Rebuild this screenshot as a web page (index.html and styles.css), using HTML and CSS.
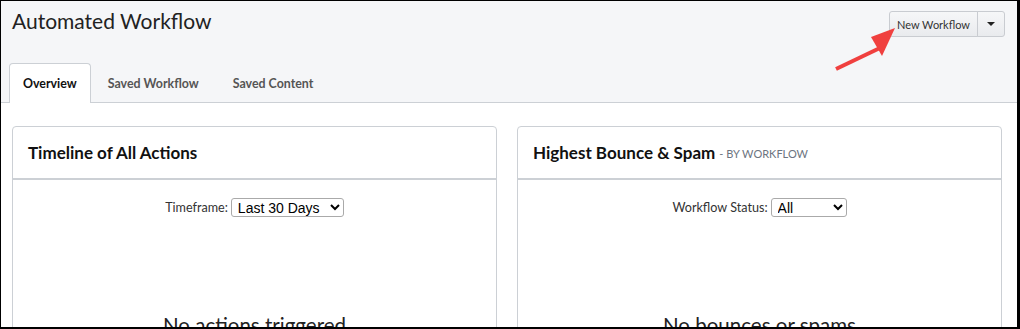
FILE: index.html
```html
<!DOCTYPE html>
<html>
<head>
<meta charset="utf-8">
<link rel="stylesheet" href="styles.css">
</head>
<body>
<div class="frame">
  <div class="top">
    <div class="title-row">
      <h1 class="title">Automated Workflow</h1>
      <div class="btn-group">
        <button class="btn">New Workflow</button>
        <button class="btn caret-btn"><span class="caret"></span></button>
      </div>
    </div>
    <div class="tabs">
      <div class="tab active">Overview</div>
      <div class="tab">Saved Workflow</div>
      <div class="tab">Saved Content</div>
    </div>
  </div>
  <div class="content">
    <div class="card">
      <div class="card-head"><span class="card-title">Timeline of All Actions</span></div>
      <div class="card-body">
        <div class="filter"><span class="label">Timeframe:</span><select class="sel sel-tf"><option>Last 30 Days</option></select></div>
        <div class="empty">No actions triggered</div>
      </div>
    </div>
    <div class="card">
      <div class="card-head"><span class="card-title">Highest Bounce &amp; Spam</span><span class="card-sub"> - BY WORKFLOW</span></div>
      <div class="card-body">
        <div class="filter"><span class="label">Workflow Status:</span><select class="sel sel-st"><option>All</option></select></div>
        <div class="empty">No bounces or spams</div>
      </div>
    </div>
  </div>
  <svg class="arrow" width="80" height="50" viewBox="0 0 80 50">
    <line x1="4" y1="44" x2="50" y2="22" stroke="#f0403f" stroke-width="4" stroke-linecap="butt"/>
    <polygon points="63,3 39,12 50,31" fill="#f0403f"/>
  </svg>
</div>
</body>
</html>
```
FILE: styles.css
```css
* { box-sizing: border-box; }
html, body { margin: 0; padding: 0; }
body { font-family: "Lato", "Liberation Sans", sans-serif; color: #222; }
.frame {
  position: relative;
  width: 1020px;
  height: 329px;
  border: 1px solid #000;
  border-right-width: 3px;
  border-bottom-width: 2px;
  overflow: hidden;
  background: #fff;
}
.top { background: #f5f6f8; }
.title-row {
  display: flex;
  justify-content: space-between;
  align-items: flex-start;
  padding: 0 12px 0 11px;
  height: 62px;
}
.title {
  margin: 6px 0 0 0;
  font-size: 21px;
  font-weight: 400;
  line-height: 28px;
  color: #222;
}
.btn-group { display: flex; margin-top: 10px; }
.btn {
  font-family: "Lato", "Liberation Sans", sans-serif;
  font-size: 11px;
  color: #333;
  height: 26px;
  padding: 0 7px;
  border: 1px solid #c9ccd1;
  background: linear-gradient(#f6f7f8, #e9ebee);
  border-radius: 3px 0 0 3px;
}
.caret-btn {
  border-left: 1px solid #c9ccd1;
  border-radius: 0 3px 3px 0;
  margin-left: -1px;
  width: 28px;
  padding: 0;
  display: flex;
  align-items: center;
  justify-content: center;
}
.caret {
  width: 0; height: 0;
  border-left: 4px solid transparent;
  border-right: 4px solid transparent;
  border-top: 4px solid #222;
}
.tabs {
  display: flex;
  padding-left: 8px;
  border-bottom: 1px solid #ccd0d5;
  height: 40px;
}
.tab {
  font-size: 12.4px;
  font-weight: 700;
  color: #555;
  padding: 0 16px;
  line-height: 39px;
  border: 1px solid transparent;
  border-bottom: none;
  margin-right: 0;
}
.tab.active {
  background: #fff;
  color: #111;
  border-color: #ccd0d5;
  border-radius: 4px 4px 0 0;
  height: 40px;
  padding: 0 13px;
}
.content {
  display: grid;
  grid-template-columns: 485px 485px;
  column-gap: 20px;
  padding: 23px 0 0 11px;
}
.card {
  border: 1px solid #ccd0d5;
  border-radius: 4px;
  height: 230px;
}
.card-head {
  height: 53px;
  border-bottom: 2px solid #ccd0d5;
  padding: 0 15px;
  display: flex;
  align-items: center;
}
.card-title { font-size: 17px; font-weight: 700; color: #111; }
.card-sub { font-size: 11px; color: #6c7480; margin-left: 4px; margin-top: 2px; }
.card-body { text-align: center; padding-top: 18px; }
.filter { display: flex; justify-content: center; align-items: center; gap: 3px; font-size: 12.6px; color: #333; }
.sel {
  font-family: "Liberation Sans", Arial, sans-serif;
  font-size: 14px;
  height: 19px;
  border: 1px solid #aaa;
  border-radius: 3px;
  background: #fff;
  color: #000;
  padding: 0 2px;
}
.sel-tf { width: 113px; }
.sel-st { width: 76px; }
.empty { font-size: 20.5px; color: #222; margin-top: 96px; }
.arrow { position: absolute; left: 831px; top: 24px; }
```
